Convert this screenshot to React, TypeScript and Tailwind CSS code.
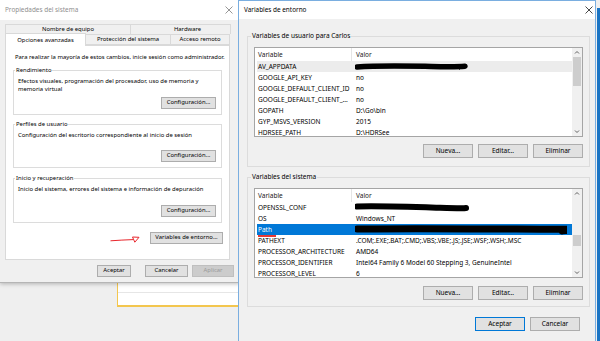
import React from "react";

// ----------------------------------------------------------------------------

type Row = {
  name: string;
  value?: string;
  redact?: "a" | "b" | "c";
  sel?: boolean;
  hover?: boolean;
  mark?: boolean;
};

const userRows: Row[] = [
  { name: "AV_APPDATA", redact: "a", hover: true },
  { name: "GOOGLE_API_KEY", value: "no" },
  { name: "GOOGLE_DEFAULT_CLIENT_ID", value: "no" },
  { name: "GOOGLE_DEFAULT_CLIENT_...", value: "no" },
  { name: "GOPATH", value: "D:\\Go\\bin" },
  { name: "GYP_MSVS_VERSION", value: "2015" },
  { name: "HDRSEE_PATH", value: "D:\\HDRSee" },
];

const sysRows: Row[] = [
  { name: "OPENSSL_CONF", redact: "b" },
  { name: "OS", value: "Windows_NT" },
  { name: "Path", redact: "c", sel: true, mark: true },
  { name: "PATHEXT", value: ".COM;.EXE;.BAT;.CMD;.VBS;.VBE;.JS;.JSE;.WSF;.WSH;.MSC" },
  { name: "PROCESSOR_ARCHITECTURE", value: "AMD64" },
  { name: "PROCESSOR_IDENTIFIER", value: "Intel64 Family 6 Model 60 Stepping 3, GenuineIntel" },
  { name: "PROCESSOR_LEVEL", value: "6" },
];

const Close = ({ color }: { color: string }) => (
  <svg width="8" height="8" viewBox="0 0 8 8">
    <path d="M0.5 0.5 L7.5 7.5 M7.5 0.5 L0.5 7.5" stroke={color} strokeWidth="0.9" />
  </svg>
);

const Btn = ({ children, className = "" }: { children: React.ReactNode; className?: string }) => (
  <div className={`flex items-center justify-center leading-none whitespace-nowrap ${className}`}>{children}</div>
);

const Group = ({
  title,
  className = "",
  labelClass = "",
  children,
}: {
  title: string;
  className?: string;
  labelClass?: string;
  children: React.ReactNode;
}) => (
  <div className={`border border-[#dcdcdc] flex flex-col shrink-0 ${className}`}>
    <div className={`self-start px-[1px] whitespace-nowrap ${labelClass}`}>{title}</div>
    {children}
  </div>
);

const Redact = ({ kind }: { kind: "a" | "b" | "c" }) => {
  if (kind === "c")
    return (
      <svg width="212" height="11" viewBox="0 0 212 11">
        <path d="M2 5 C 50 4.2, 120 4.8, 190 5.2 S 204 6, 207 7" stroke="#000" strokeWidth="7" strokeLinecap="round" fill="none" />
      </svg>
    );
  if (kind === "b")
    return (
      <svg width="115" height="11" viewBox="0 0 115 11">
        <path d="M2 4.5 C 25 3.8, 60 5, 85 5.8 S 106 6.4, 111 6" stroke="#000" strokeWidth="6" strokeLinecap="round" fill="none" />
      </svg>
    );
  return (
    <svg width="115" height="11" viewBox="0 0 115 11">
      <path d="M2 6 C 20 4.6, 45 4.8, 70 5.3 S 100 6, 110 5.2" stroke="#000" strokeWidth="5.5" strokeLinecap="round" fill="none" />
      <path d="M104 8.5 L106 7" stroke="#000" strokeWidth="1" />
    </svg>
  );
};

const Chevron = ({ up }: { up?: boolean }) => (
  <svg width="6" height="9" viewBox="0 0 6 9">
    <path d={up ? "M1 5.5 L3 3.5 L5 5.5" : "M1 3.5 L3 5.5 L5 3.5"} stroke="#606060" strokeWidth="1" fill="none" />
  </svg>
);

const List = ({ rows, thumb, className = "" }: { rows: Row[]; thumb: string; className?: string }) => (
  <div className={`ml-[6px] w-[329px] h-[90px] shrink-0 border border-[#a5a5a5] bg-white flex ${className}`}>
    <div className="flex-1 flex flex-col overflow-hidden">
      <div className="h-[13px] shrink-0 flex text-[#1a1a1a]">
        <div className="w-[97px] pl-[3px] border-r border-[#e5e5e5] flex items-center">Variable</div>
        <div className="pl-[4px] flex items-center">Valor</div>
      </div>
      {rows.map((r) => (
        <div
          key={r.name}
          className={`relative h-[11px] shrink-0 ml-[2px] flex items-center ${
            r.sel ? "bg-[#0078d7] text-white" : r.hover ? "bg-[#ececec]" : ""
          }`}
        >
          <div className="w-[95px] shrink-0 pl-[1px] whitespace-nowrap overflow-hidden">{r.name}</div>
          <div className="pl-[3px] whitespace-nowrap flex items-center">
            {r.redact ? <Redact kind={r.redact} /> : <span className="pl-[1px]">{r.value}</span>}
          </div>
          {r.mark && <div className="absolute left-[1px] top-[11px] w-[18px] h-[1.5px] bg-[#e53935]" />}
        </div>
      ))}
    </div>
    <div className="w-[10px] bg-[#f0f0f0] flex flex-col items-center">
      <Chevron up />
      <div className={`w-[8px] bg-[#cdcdcd] ${thumb}`} />
      <div className="flex-1" />
      <Chevron />
    </div>
  </div>
);

const EditButtons = ({ className = "" }: { className?: string }) => (
  <div className={`ml-[6px] w-[329px] flex justify-end gap-[5px] ${className}`}>
    <Btn className="w-[50px] h-[14px] bg-[#e1e1e1] border border-[#adadad]">Nueva...</Btn>
    <Btn className="w-[50px] h-[14px] bg-[#e1e1e1] border border-[#adadad]">Editar...</Btn>
    <Btn className="w-[50px] h-[14px] bg-[#e1e1e1] border border-[#adadad]">Eliminar</Btn>
  </div>
);

const SystemProps = () => (
  <div className="absolute left-0 top-0 w-[240px] h-[283px] bg-[#f0f0f0] border-b border-[#b5b5b5] shadow-[0_1px_4px_rgba(0,0,0,0.25)] flex flex-col text-[5.9px] text-black">
    <div className="h-[20px] shrink-0 bg-white flex items-center justify-between pl-[5px] pr-[7px]">
      <span className="text-[6.4px] text-[#8f8f8f]">Propiedades del sistema</span>
      <Close color="#8a8a8a" />
    </div>

    <div className="ml-[5px] mt-[4px] w-[226px] flex flex-col">
      <div className="flex h-[10px]">
        <div className="w-[126px] border border-b-0 border-[#d9d9d9] flex items-center justify-center">Nombre de equipo</div>
        <div className="flex-1 border border-l-0 border-b-0 border-[#d9d9d9] flex items-center justify-center pl-[14px]">Hardware</div>
      </div>
      <div className="relative z-10 flex h-[11px] items-end">
        <div className="w-[81px] h-[13px] -mb-px bg-white border border-b-0 border-[#d9d9d9] flex items-center justify-center">Opciones avanzadas</div>
        <div className="w-[85px] h-[11px] border border-l-0 border-[#d9d9d9] flex items-center justify-center">Protección del sistema</div>
        <div className="w-[59px] h-[11px] border border-l-0 border-[#d9d9d9] flex items-center justify-center">Acceso remoto</div>
      </div>

      <div className="w-[225px] h-[215px] bg-white border border-[#d9d9d9] flex flex-col pl-[7px] pr-[7px]">
        <div className="mt-[8px] ml-[2px] leading-[7px] whitespace-nowrap">
          Para realizar la mayoría de estos cambios, inicie sesión como administrador.
        </div>

        <Group title="Rendimiento" className="mt-[9px] h-[45px]" labelClass="-mt-[4px] ml-[1px] leading-[7px] bg-white">
          <div className="mt-[3px] ml-[4px] leading-[8px]">
            <div>Efectos visuales, programación del procesador, uso de memoria y</div>
            <div>memoria virtual</div>
          </div>
          <Btn className="mt-auto mb-[5px] mr-[5px] self-end w-[55px] h-[12px] bg-[#e1e1e1] border border-[#adadad]">Configuración...</Btn>
        </Group>

        <Group title="Perfiles de usuario" className="mt-[9px] h-[44px]" labelClass="-mt-[4px] ml-[1px] leading-[7px] bg-white">
          <div className="mt-[3px] ml-[4px] leading-[8px]">Configuración del escritorio correspondiente al inicio de sesión</div>
          <Btn className="mt-auto mb-[5px] mr-[5px] self-end w-[55px] h-[12px] bg-[#e1e1e1] border border-[#adadad]">Configuración...</Btn>
        </Group>

        <Group title="Inicio y recuperación" className="mt-[10px] h-[45px]" labelClass="-mt-[4px] ml-[1px] leading-[7px] bg-white">
          <div className="mt-[3px] ml-[4px] leading-[8px]">Inicio del sistema, errores del sistema e información de depuración</div>
          <Btn className="mt-auto mb-[5px] mr-[5px] self-end w-[55px] h-[12px] bg-[#e1e1e1] border border-[#adadad]">Configuración...</Btn>
        </Group>

        <div className="mt-[9px] -mr-[1px] flex justify-end items-center">
          <svg width="30" height="9" viewBox="0 0 30 9" className="mr-[10px]">
            <path d="M0.5 6.8 Q 12 6 23 5.6" stroke="#e8262c" strokeWidth="1" fill="none" />
            <path d="M22.5 3 L29 3.3 L24.8 8.2 Z" stroke="#e8262c" strokeWidth="1" fill="none" strokeLinejoin="round" />
          </svg>
          <Btn className="w-[73px] h-[12px] bg-[#e1e1e1] border border-[#adadad]">Variables de entorno...</Btn>
        </div>
      </div>
    </div>

    <div className="flex mt-[5px] h-[12px] ml-[97px]">
      <Btn className="w-[34px] h-[12px] bg-[#e1e1e1] border border-[#adadad]">Aceptar</Btn>
      <Btn className="ml-[14px] w-[43px] h-[12px] bg-[#e1e1e1] border border-[#adadad]">Cancelar</Btn>
      <Btn className="ml-[4px] w-[42px] h-[12px] bg-[#cccccc] border border-[#bfbfbf] text-[#9a9a9a]">Aplicar</Btn>
    </div>
  </div>
);

const EnvVars = () => (
  <div className="absolute left-[238px] top-0 w-[358px] h-[341px] bg-[#f0f0f0] border border-b-0 border-[#7aaee0] flex flex-col text-[6.5px] text-black">
    <div className="h-[18px] shrink-0 bg-white flex items-center justify-between pl-[5px] pr-[2px]">
      <span className="text-[6.4px] text-black">Variables de entorno</span>
      <Close color="#333" />
    </div>

    <div className="ml-[8px] mt-[17px] flex flex-col">
      <Group
        title="Variables de usuario para Carlos"
        className="w-[343px] h-[131px]"
        labelClass="-mt-[5px] ml-[3px] leading-[8px] bg-[#f0f0f0]"
      >
        <List rows={userRows} thumb="h-[29px]" className="mt-[7px]" />
        <EditButtons className="mt-[7px]" />
      </Group>

      <Group
        title="Variables del sistema"
        className="mt-[10px] w-[343px] h-[130px]"
        labelClass="-mt-[5px] ml-[3px] leading-[8px] bg-[#f0f0f0]"
      >
        <List rows={sysRows} thumb="mt-[37px] h-[11px]" className="mt-[7px]" />
        <EditButtons className="mt-[8px]" />
      </Group>

      <div className="mt-[10px] w-[333px] flex justify-end gap-[5px]">
        <Btn className="w-[50px] h-[14px] bg-[#e1e1e1] border-[1.5px] border-[#0078d7]">Aceptar</Btn>
        <Btn className="w-[50px] h-[14px] bg-[#e1e1e1] border border-[#adadad]">Cancelar</Btn>
      </div>
    </div>
  </div>
);

const App = () => {
  return (
    <div className="relative w-[600px] h-[341px] overflow-hidden bg-[#efefef] font-['Noto_Sans',sans-serif]">
      {/* window behind, only its lower edge shows */}
      <div className="absolute left-[117px] top-[270px] w-[125px] h-[37px] bg-white border-l border-b-2 border-[#f3c64e]">
        <div className="mt-[22px] border-t border-[#e6e6e6]" />
      </div>

      <SystemProps />
      <EnvVars />

      <div className="absolute left-[597px] top-[8px] w-[3px] h-[333px] bg-[#1a74c4]" />
    </div>
  );
};

export default App;
